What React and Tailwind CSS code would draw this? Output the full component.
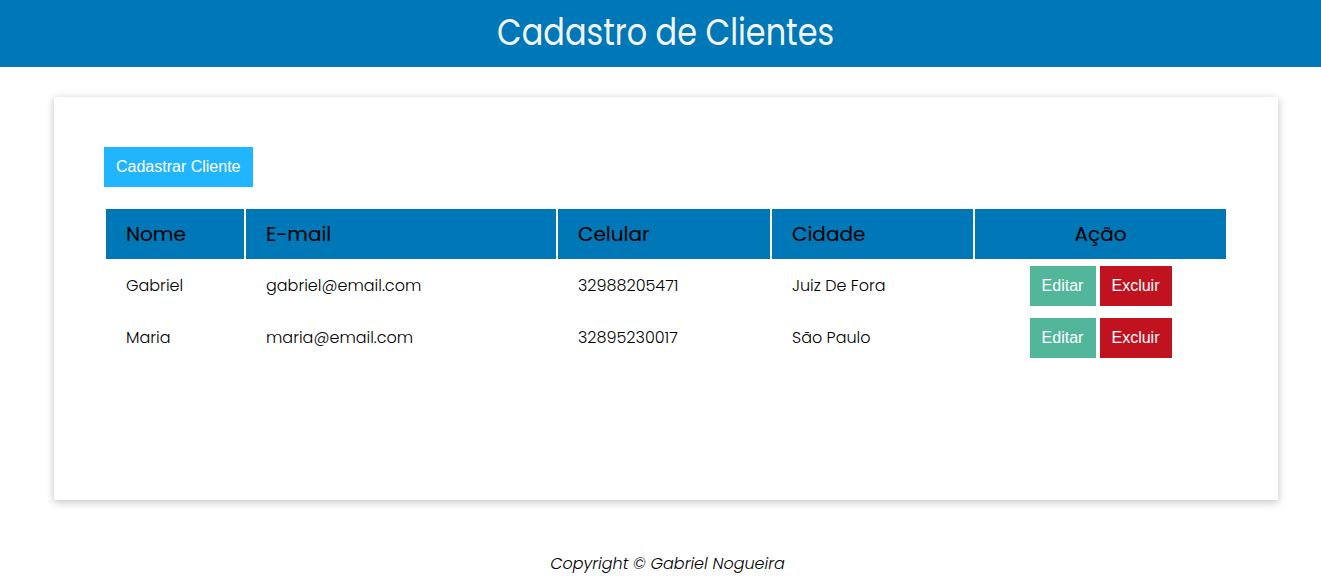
const clientes = [
  { nome: "Gabriel", email: "gabriel@email.com", celular: "32988205471", cidade: "Juiz De Fora" },
  { nome: "Maria", email: "maria@email.com", celular: "32895230017", cidade: "São Paulo" },
];

export default function App() {
  return (
    <div className="min-h-screen bg-white font-['Poppins','Noto_Sans',sans-serif]">
      <header className="h-[67px] bg-[#0077b6] flex items-center justify-center pl-[10px]">
        {/* the title in the screenshot is tall and narrow */}
        <h1 className="text-[38px] leading-none text-[#f2f6fa] font-normal scale-x-[0.84] -mt-[4px]">Cadastro de Clientes</h1>
      </header>

      <main className="ml-[54px] w-[1224px] mt-[30px] h-[403px] bg-white shadow-[0_2px_8px_rgba(0,0,0,0.25)] px-[50px] pt-[50px]">
        <button className="h-10 px-3 bg-[#22b5ff] text-white text-base font-['Liberation_Sans',Arial,sans-serif]">
          Cadastrar Cliente
        </button>

        <table className="mt-5 border-separate border-spacing-[2px] w-[1124px]">
          <thead>
            <tr className="bg-[#0077b6] text-black text-[20px] h-[50px]">
              <th className="w-[138px] text-left pl-5 font-normal">Nome</th>
              <th className="w-[310px] text-left pl-5 font-normal">E-mail</th>
              <th className="w-[212px] text-left pl-5 font-normal">Celular</th>
              <th className="w-[201px] text-left pl-5 font-normal">Cidade</th>
              <th className="text-center font-normal">Ação</th>
            </tr>
          </thead>
          <tbody>
            {clientes.map((c) => (
              <tr key={c.email} className="h-[50px] text-base font-light text-black">
                <td className="pl-5">{c.nome}</td>
                <td className="pl-5">{c.email}</td>
                <td className="pl-5">{c.celular}</td>
                <td className="pl-5">{c.cidade}</td>
                <td className="text-center">
                  <div className="flex justify-center gap-1 font-['Liberation_Sans',Arial,sans-serif]">
                    <button className="h-10 w-[66px] bg-[#52b69a] text-white text-base">Editar</button>
                    <button className="h-10 w-[72px] bg-[#c1121f] text-white text-base">Excluir</button>
                  </div>
                </td>
              </tr>
            ))}
          </tbody>
        </table>
      </main>

      <footer className="mt-[52px] pl-[14px] text-center italic font-light text-base text-black">
        Copyright © Gabriel Nogueira
      </footer>
    </div>
  );
}
